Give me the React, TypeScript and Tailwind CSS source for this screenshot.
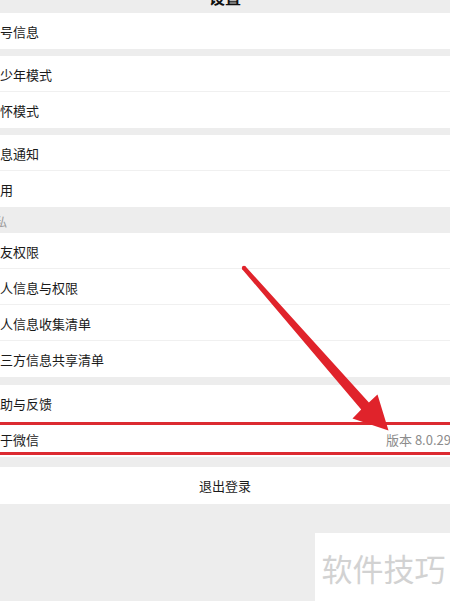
import React from 'react';

const font = { fontFamily: '"Noto Sans CJK SC", "Noto Sans", sans-serif' };

const Row: React.FC<{ label: string; divider?: boolean; right?: string }> = ({ label, divider, right }) => (
  <div className="relative h-[36px] bg-white flex items-center justify-between">
    <span className="-ml-[13px] text-[13px] leading-none text-[#1a1a1a]">{label}</span>
    {right && <span className="-mr-[1px] text-[13px] leading-none text-[#8c8c8c]">{right}</span>}
    {divider && <div className="absolute left-0 right-0 bottom-0 h-px bg-[#f0f0f0]" />}
  </div>
);

const App: React.FC = () => {
  return (
    <div className="relative w-[450px] h-[601px] overflow-hidden bg-[#ededed]" style={font}>
      {/* nav bar, title cut off at the top */}
      <div className="h-[13px] flex items-end justify-center overflow-hidden">
        <span className="mb-[5px] text-[16px] leading-[22px] font-semibold text-[#111]">设置</span>
      </div>

      <Row label="帐号信息" />

      <div className="mt-[7px]">
        <Row label="青少年模式" divider />
        <Row label="关怀模式" />
      </div>

      <div className="mt-[7px]">
        <Row label="消息通知" divider />
        <Row label="通用" />
      </div>

      <div className="h-[26px] flex items-end pb-[5px]">
        <span className="-ml-[17px] text-[12px] leading-none text-[#9a9a9a]">隐私</span>
      </div>

      <div>
        <Row label="朋友权限" divider />
        <Row label="个人信息与权限" divider />
        <Row label="个人信息收集清单" divider />
        <Row label="第三方信息共享清单" />
      </div>

      <div className="mt-[8px]">
        <Row label="帮助与反馈" />
        <div className="relative">
          <Row label="关于微信" right="版本 8.0.29" />
          <div className="absolute left-0 right-0 top-[1px] bottom-[2px] border-y-[3px] border-[#dc2a31]" />
        </div>
      </div>

      <div className="mt-[10px] h-[37px] bg-white flex items-center justify-center">
        <span className="text-[13px] leading-none text-[#1a1a1a]">退出登录</span>
      </div>

      {/* annotation arrow */}
      <svg className="absolute left-0 top-0" width="450" height="601" viewBox="0 0 450 601">
        <circle cx="244" cy="268" r="2.2" fill="#e0232b" />
        <polygon
          points="245.6,266.6 368.9,402.4 377.5,394.5 388.5,430.5 352.5,418.5 361.2,409.5 242.4,269.4"
          fill="#e0232b"
        />
      </svg>

      {/* watermark */}
      <div className="absolute right-0 bottom-0 w-[135px] h-[68px] bg-white flex items-center justify-center">
        <span className="text-[31px] leading-none tracking-[0px] text-[#d2d2d2] pl-[2px]">软件技巧</span>
      </div>
    </div>
  );
};

export default App;
